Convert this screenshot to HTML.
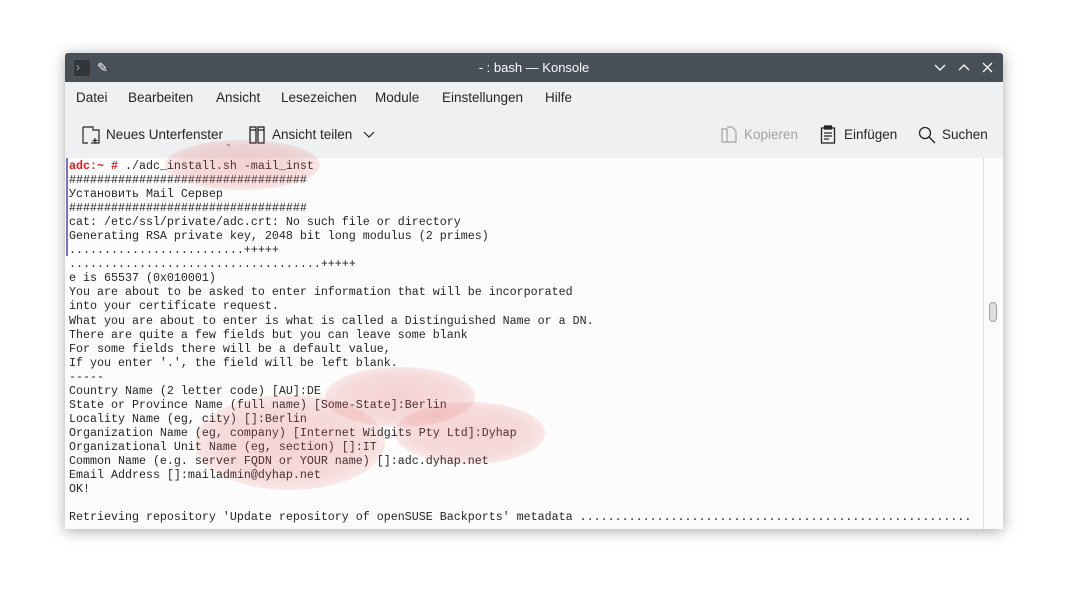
<!DOCTYPE html>
<html><head><meta charset="utf-8"><style>
body{margin:0;width:1068px;height:606px;background:#fff;position:relative;overflow:hidden;font-family:"Liberation Sans",sans-serif}
.win{position:absolute;left:65px;top:53px;width:938px;height:476px;background:#eff0f1;box-shadow:0 2px 14px rgba(0,0,0,.35);border-radius:3px 3px 0 0;overflow:hidden}
.title{position:absolute;left:0;top:0;width:938px;height:29px;background:#475057;color:#fcfcfc;font-size:13px;text-align:center;line-height:29px}
.menu{position:absolute;top:29px;left:0;height:30px;font-size:13.5px;color:#232627}
.menu span{position:absolute;top:8px;white-space:nowrap}
.tb{position:absolute;top:74px;font-size:13.5px;color:#232627;white-space:nowrap}
.term{position:absolute;left:0;top:105px;width:938px;height:371px;background:#fcfcfc}
pre{position:absolute;left:4px;top:1px;margin:0;font-family:"Liberation Mono",monospace;font-size:11.67px;line-height:14.04px;color:#232627;letter-spacing:0}
.blob{position:absolute;border-radius:50%;background:radial-gradient(ellipse at center,rgba(225,90,90,.26) 0%,rgba(225,90,90,.2) 55%,rgba(225,90,90,0) 100%)}
</style></head><body>
<div class="win">
 <div class="title">- : bash — Konsole
  <div style="position:absolute;left:8px;top:6px;width:16px;height:16px;background:#31363b;border:1px solid #555"></div>
  <div style="position:absolute;left:11px;top:4px;color:#aaa;font-size:12px;line-height:20px">›</div>
  <div style="position:absolute;left:32px;top:0;font-size:13px">✎</div>
  <svg style="position:absolute;left:868px;top:9px" width="64" height="12" stroke="#fcfcfc" fill="none" stroke-width="1.3"><path d="M2 3l5 5 5-5"/><path d="M26 8l5-5 5 5"/><path d="M50 1l9 9M59 1l-9 9"/></svg>
 </div>
 <div class="menu"><span style="left:11px">Datei</span><span style="left:63px">Bearbeiten</span><span style="left:151px">Ansicht</span><span style="left:216px">Lesezeichen</span><span style="left:310px">Module</span><span style="left:377px">Einstellungen</span><span style="left:480px">Hilfe</span></div>
 <svg style="position:absolute;left:17px;top:73px" width="18" height="18" fill="none" stroke="#232627" stroke-width="1.2"><path d="M1 1h10v3h6v13H9M1 1v16h5"/><path d="M13 12v5M10.5 14.5h5"/></svg>
 <div class="tb" style="left:41px">Neues Unterfenster</div>
 <div style="position:absolute;left:160px;top:86px;font-size:8px;color:#555">⌄</div>
 <svg style="position:absolute;left:184px;top:73px" width="16" height="18" fill="none" stroke="#232627" stroke-width="1.3"><rect x="1" y="1" width="6" height="16"/><rect x="9" y="1" width="6" height="16"/><path d="M1 4h6M9 4h6"/></svg>
 <div class="tb" style="left:207px">Ansicht teilen</div>
 <svg style="position:absolute;left:298px;top:78px" width="12" height="8" fill="none" stroke="#232627" stroke-width="1.2"><path d="M1 1l5 5 5-5"/></svg>
 <svg style="position:absolute;left:656px;top:73px" width="16" height="18" fill="none" stroke="#a0a2a4" stroke-width="1.2"><path d="M1 3h5v13H1zM6 1h5l4 4v11H6"/></svg>
 <div class="tb" style="left:679px;color:#a0a2a4">Kopieren</div>
 <svg style="position:absolute;left:755px;top:72px" width="16" height="19" fill="none" stroke="#232627" stroke-width="1.3"><rect x="1.5" y="3" width="13" height="15"/><rect x="4.5" y="1" width="7" height="3" fill="#232627"/><path d="M4 8h8M4 11h8M4 14h5"/></svg>
 <div class="tb" style="left:779px">Einfügen</div>
 <svg style="position:absolute;left:853px;top:73px" width="18" height="18" fill="none" stroke="#232627" stroke-width="1.3"><circle cx="7" cy="7" r="5.5"/><path d="M11 11l6 6"/></svg>
 <div class="tb" style="left:877px">Suchen</div>
 <div class="term">
  <div style="position:absolute;left:1px;top:0;width:2px;height:98px;background:#7a6fc8"></div>
  <div style="position:absolute;left:918px;top:0;width:1px;height:371px;background:#dcdcdc"></div>
  <div style="position:absolute;left:924px;top:144px;width:6px;height:18px;border:1px solid #a0a2a4;border-radius:4px;background:#dcdedf"></div>
<pre><b style="color:#ed1515">adc:~ #</b> ./adc_install.sh -mail_inst
##################################
Установить Mail Сервер
##################################
cat: /etc/ssl/private/adc.crt: No such file or directory
Generating RSA private key, 2048 bit long modulus (2 primes)
.........................+++++
....................................+++++
e is 65537 (0x010001)
You are about to be asked to enter information that will be incorporated
into your certificate request.
What you are about to enter is what is called a Distinguished Name or a DN.
There are quite a few fields but you can leave some blank
For some fields there will be a default value,
If you enter '.', the field will be left blank.
-----
Country Name (2 letter code) [AU]:DE
State or Province Name (full name) [Some-State]:Berlin
Locality Name (eg, city) []:Berlin
Organization Name (eg, company) [Internet Widgits Pty Ltd]:Dyhap
Organizational Unit Name (eg, section) []:IT
Common Name (e.g. server FQDN or YOUR name) []:adc.dyhap.net
Email Address []:mailadmin@dyhap.net
OK!

Retrieving repository 'Update repository of openSUSE Backports' metadata ........................................................</pre>
 </div>
</div>
<div class="blob" style="left:165px;top:140px;width:155px;height:50px"></div>
<div class="blob" style="left:325px;top:367px;width:150px;height:60px"></div>
<div class="blob" style="left:395px;top:402px;width:150px;height:62px"></div>
<div class="blob" style="left:195px;top:395px;width:190px;height:95px"></div>
</body></html>
